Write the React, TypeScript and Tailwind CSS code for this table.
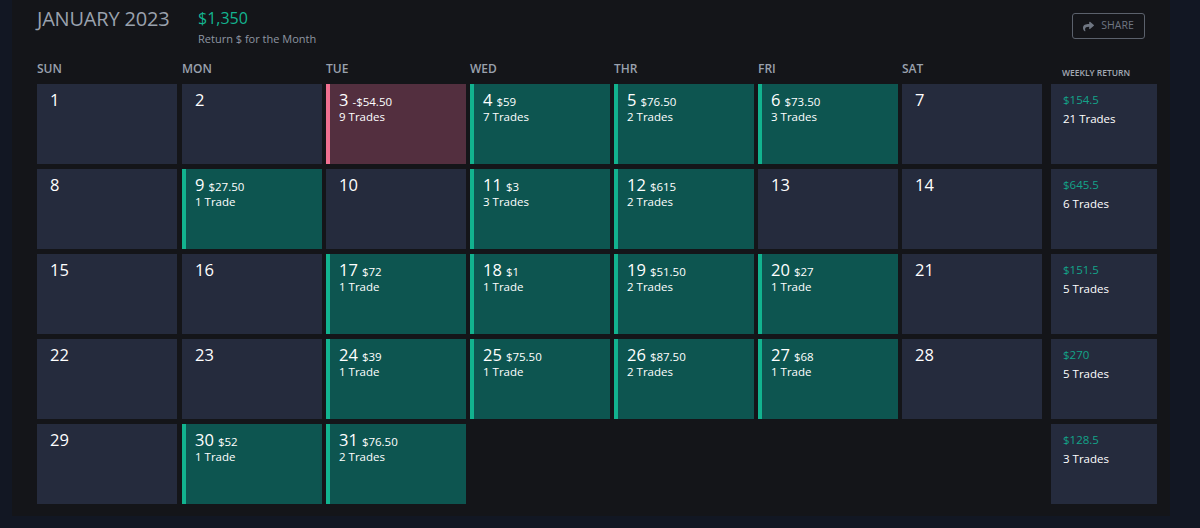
import React from 'react';
import { FaShare } from 'react-icons/fa';

type Day = { d: number; amt?: string; trades?: number; loss?: boolean };

const weeks: (Day | null)[][] = [
  [{ d: 1 }, { d: 2 }, { d: 3, amt: '-$54.50', trades: 9, loss: true }, { d: 4, amt: '$59', trades: 7 }, { d: 5, amt: '$76.50', trades: 2 }, { d: 6, amt: '$73.50', trades: 3 }, { d: 7 }],
  [{ d: 8 }, { d: 9, amt: '$27.50', trades: 1 }, { d: 10 }, { d: 11, amt: '$3', trades: 3 }, { d: 12, amt: '$615', trades: 2 }, { d: 13 }, { d: 14 }],
  [{ d: 15 }, { d: 16 }, { d: 17, amt: '$72', trades: 1 }, { d: 18, amt: '$1', trades: 1 }, { d: 19, amt: '$51.50', trades: 2 }, { d: 20, amt: '$27', trades: 1 }, { d: 21 }],
  [{ d: 22 }, { d: 23 }, { d: 24, amt: '$39', trades: 1 }, { d: 25, amt: '$75.50', trades: 1 }, { d: 26, amt: '$87.50', trades: 2 }, { d: 27, amt: '$68', trades: 1 }, { d: 28 }],
  [{ d: 29 }, { d: 30, amt: '$52', trades: 1 }, { d: 31, amt: '$76.50', trades: 2 }, null, null, null, null],
];

const weekly = [
  { amt: '$154.5', trades: 21 },
  { amt: '$645.5', trades: 6 },
  { amt: '$151.5', trades: 5 },
  { amt: '$270', trades: 5 },
  { amt: '$128.5', trades: 3 },
];

const dayNames = ['SUN', 'MON', 'TUE', 'WED', 'THR', 'FRI', 'SAT'];

const DayCell: React.FC<{ day: Day | null }> = ({ day }) => {
  if (!day) return <div />;
  const traded = day.trades !== undefined;
  const cls = !traded
    ? 'bg-[#252b3d] pl-[13px]'
    : day.loss
      ? 'bg-[#532f3f] border-l-4 border-[#f07090] pl-[9px]'
      : 'bg-[#0d5550] border-l-4 border-[#12b38f] pl-[9px]';
  return (
    <div className={`w-[140px] h-20 pt-[7px] text-white ${cls}`}>
      <div className="flex items-baseline gap-[4px] leading-[17px]">
        <span className="text-[16.5px]">{day.d}</span>
        {day.amt && <span className="text-[11.5px]">{day.amt}</span>}
      </div>
      {traded && (
        <div className="text-[11.5px] leading-[14px]">
          {day.trades} {day.trades === 1 ? 'Trade' : 'Trades'}
        </div>
      )}
    </div>
  );
};

export default function App() {
  return (
    <div className="w-full h-[528px] bg-[#121723] pl-3 overflow-hidden" style={{ fontFamily: '"Open Sans", "Liberation Sans", sans-serif' }}>
      <div className="w-[1158px] h-[516px] bg-[#141519] pl-[25px]">
        <div className="flex items-start h-[60px]">
          <div className="text-[20px] text-[#9aa1ad] leading-7 pt-[5px] w-[161px] tracking-[-0.2px]">JANUARY 2023</div>
          <div className="pt-[8px]">
            <div className="text-[16px] leading-5 text-[#13b48f]">$1,350</div>
            <div className="text-[11px] leading-4 text-[#8e95a2] mt-[3px]">Return $ for the Month</div>
          </div>
          <button className="ml-auto mr-[25px] mt-[13px] w-[73px] h-[26px] border border-[#5b616c] rounded-[3px] flex items-center justify-center gap-[7px] text-[#6f7682] text-[10.5px]">
            <FaShare className="w-[11px] h-[11px]" />
            SHARE
          </button>
        </div>
        <div className="grid grid-cols-[145px_repeat(6,144px)_115px] gap-y-[5px]">
          {dayNames.map((n) => (
            <div key={n} className="text-[12px] font-semibold text-[#9aa1ad] h-[19px] leading-[18px]">{n}</div>
          ))}
          <div className="pl-[16px] h-[19px] text-[8.5px] font-semibold text-[#a3a9b4] pt-[6px] leading-[13px]">WEEKLY RETURN</div>
          {weeks.map((w, i) => (
            <React.Fragment key={i}>
              {w.map((d, j) => (
                <DayCell key={j} day={d} />
              ))}
              <div className="pl-[5px]">
                <div className="w-[106px] h-20 bg-[#252b3d] pl-3 pt-[8px]">
                  <div className="text-[11.5px] leading-4 text-[#13a389]">{weekly[i].amt}</div>
                  <div className="text-[11.5px] leading-4 text-white mt-[3px]">{weekly[i].trades} Trades</div>
                </div>
              </div>
            </React.Fragment>
          ))}
        </div>
      </div>
    </div>
  );
}
